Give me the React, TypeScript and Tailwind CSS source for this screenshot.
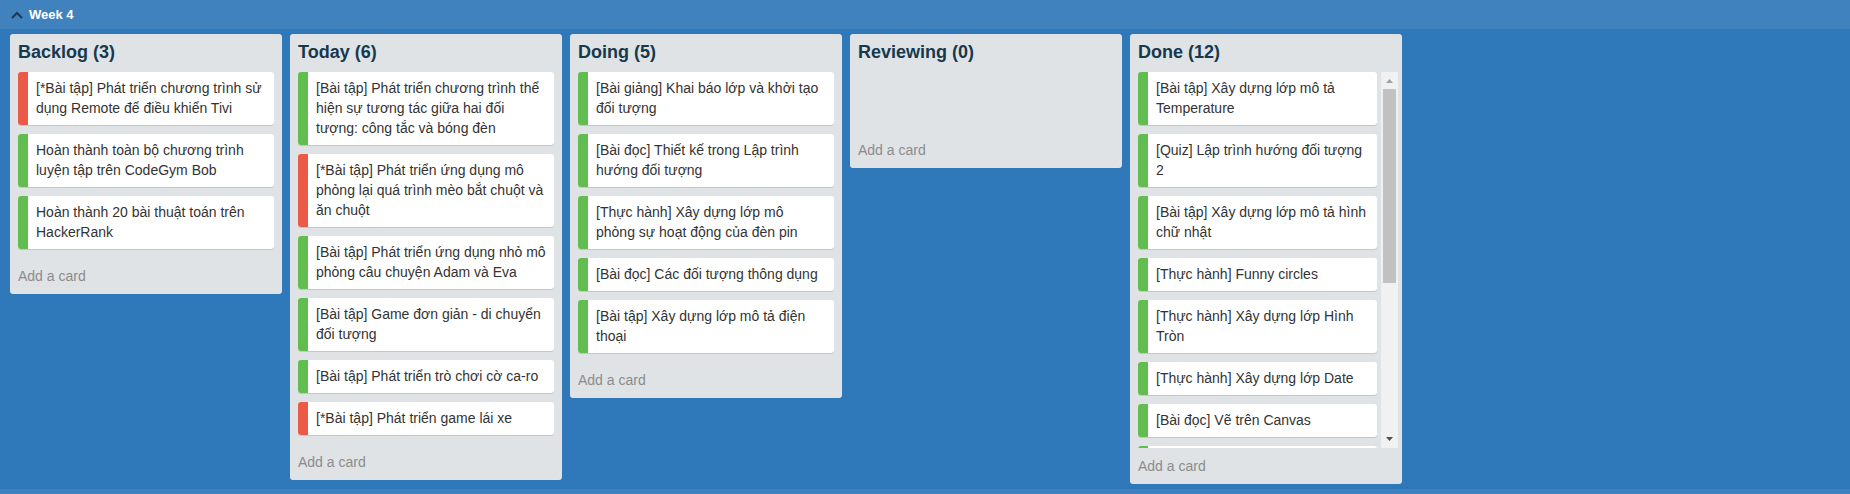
import React from "react";

type Card = { text: string; color: "red" | "green" };

const R: "red" = "red";
const G: "green" = "green";

const lists: { title: string; cards: Card[]; scroll?: boolean }[] = [
  {
    title: "Backlog (3)",
    cards: [
      { text: "[*Bài tập] Phát triển chương trình sử dụng Remote để điều khiển Tivi", color: R },
      { text: "Hoàn thành toàn bộ chương trình luyện tập trên CodeGym Bob", color: G },
      { text: "Hoàn thành 20 bài thuật toán trên HackerRank", color: G },
    ],
  },
  {
    title: "Today (6)",
    cards: [
      { text: "[Bài tập] Phát triển chương trình thể hiện sự tương tác giữa hai đối tượng: công tắc và bóng đèn", color: G },
      { text: "[*Bài tập] Phát triển ứng dụng mô phỏng lại quá trình mèo bắt chuột và ăn chuột", color: R },
      { text: "[Bài tập] Phát triển ứng dụng nhỏ mô phỏng câu chuyện Adam và Eva", color: G },
      { text: "[Bài tập] Game đơn giản - di chuyển đối tượng", color: G },
      { text: "[Bài tập] Phát triển trò chơi cờ ca-ro", color: G },
      { text: "[*Bài tập] Phát triển game lái xe", color: R },
    ],
  },
  {
    title: "Doing (5)",
    cards: [
      { text: "[Bài giảng] Khai báo lớp và khởi tạo đối tượng", color: G },
      { text: "[Bài đọc] Thiết kế trong Lập trình hướng đối tượng", color: G },
      { text: "[Thực hành] Xây dựng lớp mô phỏng sự hoạt động của đèn pin", color: G },
      { text: "[Bài đọc] Các đối tượng thông dụng", color: G },
      { text: "[Bài tập] Xây dựng lớp mô tả điện thoại", color: G },
    ],
  },
  { title: "Reviewing (0)", cards: [] },
  {
    title: "Done (12)",
    scroll: true,
    cards: [
      { text: "[Bài tập] Xây dựng lớp mô tả Temperature", color: G },
      { text: "[Quiz] Lập trình hướng đối tượng 2", color: G },
      { text: "[Bài tập] Xây dựng lớp mô tả hình chữ nhật", color: G },
      { text: "[Thực hành] Funny circles", color: G },
      { text: "[Thực hành] Xây dựng lớp Hình Tròn", color: G },
      { text: "[Thực hành] Xây dựng lớp Date", color: G },
      { text: "[Bài đọc] Vẽ trên Canvas", color: G },
      { text: "", color: G },
    ],
  },
];

function CardView({ card }: { card: Card }) {
  return (
    <div className="flex rounded-[3px] bg-white shadow-[0_1px_0_#c2c7cb] mb-[9px] overflow-hidden">
      <div
        className={
          card.color === "red"
            ? "w-[10px] shrink-0 bg-[#eb5a46]"
            : "w-[10px] shrink-0 bg-[#61bd4f]"
        }
      />
      <div className="pl-[8px] pr-[8px] pt-[6px] pb-[7px] min-h-[33px] text-[14px] leading-[20px] text-[#333333]">
        {card.text}
      </div>
    </div>
  );
}

function Scrollbar() {
  return (
    <div className="w-[17px] shrink-0 h-full bg-[#f1f1f1] relative">
      <svg className="absolute left-[5px] top-[7px]" width="7" height="4" viewBox="0 0 7 4">
        <polygon points="3.5,0 7,4 0,4" fill="#a3a3a3" />
      </svg>
      <div className="absolute left-[2px] right-[2px] top-[17px] h-[194px] bg-[#c1c1c1]" />
      <svg className="absolute left-[5px] bottom-[7px]" width="7" height="4" viewBox="0 0 7 4">
        <polygon points="0,0 7,0 3.5,4" fill="#505050" />
      </svg>
    </div>
  );
}

function ListView({ list }: { list: (typeof lists)[number] }) {
  return (
    <div className="w-[272px] shrink-0 bg-[#dfe3e6] rounded-[3px] px-[8px]">
      <div className="pt-[6px] mb-[8px] text-[18px] leading-[24px] font-bold text-[#17394d]">
        {list.title}
      </div>
      {list.scroll ? (
        <div className="flex h-[376px] gap-[4px] -mr-[4px] overflow-hidden">
          <div className="w-[239px] h-[376px] shrink-0 overflow-hidden">
            {list.cards.map((c, i) => (
              <CardView key={i} card={c} />
            ))}
          </div>
          <Scrollbar />
        </div>
      ) : list.cards.length === 0 ? (
        <div className="h-[60px]" />
      ) : (
        <div>
          {list.cards.map((c, i) => (
            <CardView key={i} card={c} />
          ))}
        </div>
      )}
      <div className="pt-[8px] pb-[8px] text-[14px] leading-[20px] text-[#8c8c8c]">Add a card</div>
    </div>
  );
}

export default function App() {
  return (
    <div className="w-[1850px] h-[494px] overflow-hidden font-['Liberation_Sans',Arial,sans-serif] bg-[#2f79bb]">
      <div className="h-[29px] bg-[#3f82be] flex items-center pl-[11px]">
        <svg width="12" height="8" viewBox="0 0 12 8" className="mr-[6px]">
          <polyline points="1,7 6,2 11,7" fill="none" stroke="#1b3a52" strokeWidth="2" />
        </svg>
        <span className="text-[13px] font-bold text-white leading-[16px]">Week 4</span>
      </div>
      <div className="h-[460px] flex items-start gap-[8px] pl-[10px] pt-[5px]">
        {lists.map((l, i) => (
          <ListView key={i} list={l} />
        ))}
      </div>
      <div className="h-[5px] bg-[#3f82be]" />
    </div>
  );
}
